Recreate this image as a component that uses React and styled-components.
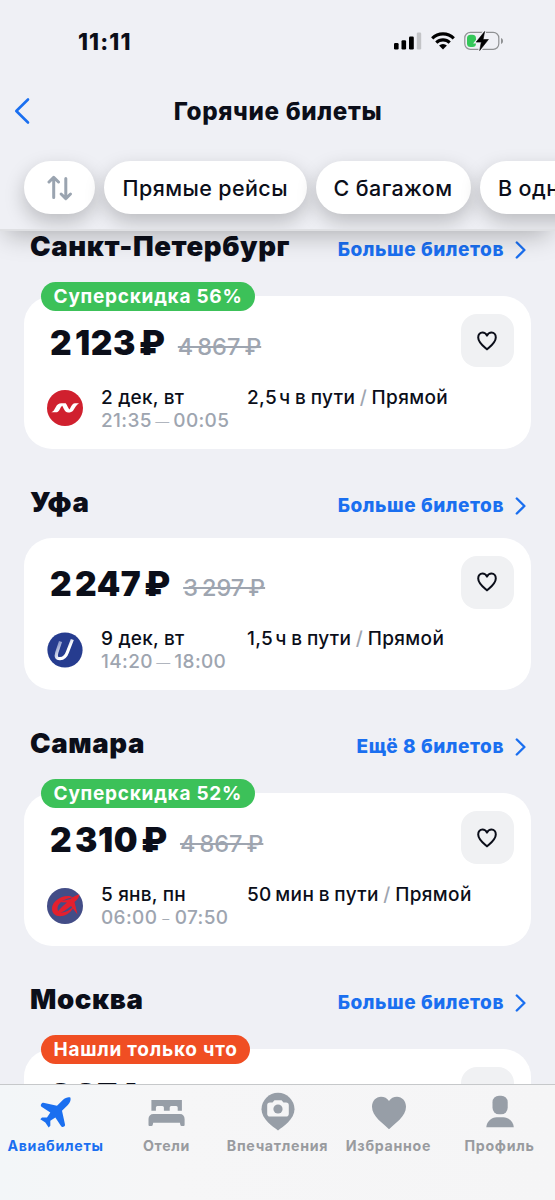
import React from 'react';
import styled, { createGlobalStyle } from 'styled-components';

const ink = '#0b0e19';
const blue = '#1a6ff0';
const gray = '#9ea5b0';
const pageColor = '#eff0f5';

const GlobalStyle = createGlobalStyle`
  * {
    box-sizing: border-box;
  }

  body {
    margin: 0;
    background-color: ${pageColor};
    font-family: Inter, 'Liberation Sans', sans-serif;
    color: ${ink};
  }

  svg {
    display: block;
    flex-shrink: 0;
  }
`;

const Screen = styled.div`
  display: flex;
  flex-direction: column;
  width: 555px;
  height: 1200px;
  overflow: hidden;
  background-color: ${pageColor};
`;

const Header = styled.header`
  position: relative;
  z-index: 1;
  flex-shrink: 0;
  height: 231px;
  overflow: hidden;
  border-bottom: 2px solid #dfe0e3;
  box-shadow: 0 10px 24px -6px rgba(0, 0, 0, 0.28);
`;

const StatusBar = styled.div`
  display: flex;
  align-items: center;
  justify-content: space-between;
  height: 82px;
  padding: 0 51px 0 78px;
`;

const Time = styled.span`
  font-size: 22.7px;
  font-weight: 800;
  letter-spacing: 1.1px;
`;

const StatusIcons = styled.div`
  display: flex;
  align-items: center;
  gap: 9px;
`;

const TitleBar = styled.div`
  display: grid;
  grid-template-columns: 60px 1fr 60px;
  align-items: center;
  height: 58px;
  padding-left: 14px;
  padding-right: 13px;
`;

const Title = styled.h1`
  margin: 0;
  padding-top: 1px;
  font-size: 24.2px;
  line-height: 30px;
  font-weight: 800;
  text-align: center;
  white-space: nowrap;
  letter-spacing: 0.65px;
`;

const Filters = styled.div`
  display: flex;
  gap: 9px;
  padding: 21px 0 0 24px;
`;

const Chip = styled.button`
  display: flex;
  align-items: center;
  justify-content: center;
  flex-shrink: 0;
  width: ${props => props.$width}px;
  height: 53px;
  padding: 0;
  border: none;
  border-radius: 27px;
  background-color: #ffffff;
  box-shadow: 0 8px 20px rgba(0, 0, 0, 0.22);
  color: ${ink};
  font-family: inherit;
  font-size: 21.5px;
  font-weight: 500;
  letter-spacing: 0.4px;
  white-space: nowrap;
`;

const Content = styled.main`
  flex: 1;
  min-height: 0;
  margin-top: -1px;
  overflow: hidden;
`;

const Section = styled.section`
  padding-bottom: 37px;
`;

const SectionHead = styled.div`
  display: flex;
  align-items: center;
  justify-content: space-between;
  height: 32px;
  margin-bottom: ${props => (props.$tall ? 34.3 : 20)}px;
  padding: 0 29px;
`;

const City = styled.h2`
  margin: 0;
  padding-left: 1px;
  font-size: 27.6px;
  line-height: 32px;
  font-weight: 900;
  letter-spacing: 0.6px;
`;

const More = styled.a`
  display: flex;
  align-items: center;
  gap: 11px;
  padding-top: 8px;
  color: ${blue};
  font-size: 19px;
  line-height: 24px;
  font-weight: 800;
  letter-spacing: 0.55px;
`;

const Card = styled.article`
  position: relative;
  height: 152.4px;
  margin: 0 24px;
  padding: 18px 17.5px 0 26px;
  border-radius: 28px;
  background-color: #ffffff;
`;

const Badge = styled.span`
  position: absolute;
  top: -14.5px;
  left: 17px;
  height: 29.5px;
  padding: 0 12.5px;
  border-radius: 15px;
  background-color: ${props => props.$color};
  color: #ffffff;
  font-size: 19px;
  line-height: 29px;
  font-weight: 700;
  letter-spacing: 0.75px;
  white-space: nowrap;
`;

const CardTop = styled.div`
  display: flex;
  justify-content: space-between;
  height: 53px;
`;

const Prices = styled.div`
  display: flex;
  align-items: baseline;
  gap: 12.5px;
  padding-top: 2.5px;
  line-height: 53px;
  white-space: nowrap;
`;

const Price = styled.strong`
  font-size: 33.5px;
  font-weight: 900;
  letter-spacing: 0.55px;
`;

const OldPrice = styled.s`
  color: ${gray};
  font-size: 23.5px;
  font-weight: 500;
  text-decoration-thickness: 2px;
`;

const LikeButton = styled.button`
  display: flex;
  align-items: center;
  justify-content: center;
  width: 53px;
  height: 53px;
  padding: 0;
  border: none;
  border-radius: 16px;
  background-color: #f0f1f3;
`;

const Flight = styled.div`
  display: grid;
  grid-template-columns: 54px 146px 1fr;
  height: 46px;
  margin-top: 18.7px;
  margin-left: -3px;
  font-size: 19px;
  line-height: 23px;
  font-weight: 500;
  letter-spacing: 0.35px;
  white-space: nowrap;
`;

const LogoCell = styled.div`
  display: flex;
  align-items: center;
  height: 45px;
`;

const Day = styled.div`
  letter-spacing: 0.2px;
`;

const Muted = styled.div`
  color: ${gray};
`;

const Route = styled.div`
  word-spacing: -0.9px;
`;

const Dash = styled.span`
  display: inline-flex;
  justify-content: center;
  width: ${props => props.$width}px;
  margin: 0 4.5px 0 4px;
  font-size: 14px;
  font-weight: 300;
  letter-spacing: 0;
`;

const Slash = styled.span`
  color: ${gray};
`;

const TabBar = styled.nav`
  display: grid;
  grid-template-columns: repeat(5, 111px);
  flex-shrink: 0;
  height: 116px;
  border-top: 1px solid #c6c8ca;
  background: linear-gradient(90deg, #f3f6f8, #f6f6f7 30%, #f5f5f6);
`;

const Tab = styled.a`
  display: flex;
  flex-direction: column;
  align-items: center;
  padding-top: 7px;
  color: ${props => (props.$active ? blue : '#979ea7')};
`;

const TabLabel = styled.span`
  margin-top: 4px;
  color: ${props => (props.$active ? blue : '#999b9f')};
  font-size: 14.2px;
  line-height: 20px;
  font-weight: 700;
  letter-spacing: 0.7px;
  white-space: nowrap;
`;

const SignalIcon = () => (
  <svg width="28" height="18" viewBox="0 0 28 18">
    <rect x="0" y="11" width="4.6" height="6.5" rx="1.2" />
    <rect x="7.5" y="8.3" width="4.6" height="9.2" rx="1.2" />
    <rect x="15" y="4.5" width="4.8" height="13" rx="1.2" />
    <rect x="22.8" y="0.5" width="4.4" height="17" rx="1.2" fill="#c3c4c7" />
  </svg>
);

const WifiIcon = () => (
  <svg width="24" height="18" viewBox="0 0 24 18">
    <g fill="none" stroke="#000" strokeWidth="3.1">
      <path d="M1.2 6.3a15.4 15.4 0 0 1 21.6 0" />
      <path d="M5.3 10.6a9.6 9.6 0 0 1 13.4 0" />
    </g>
    <path d="M12 17.4 8.1 13.5a5.6 5.6 0 0 1 7.8 0z" />
  </svg>
);

const BatteryIcon = () => (
  <svg width="40" height="20" viewBox="0 0 40 20">
    <rect x="0.8" y="1.4" width="34" height="17" rx="5.6" fill="none" stroke="#8f9193" strokeWidth="1.2" />
    <path d="M37 7v6c1.2-.4 2-1.5 2-3s-.8-2.6-2-3z" fill="#8f9193" />
    <rect x="3" y="3.7" width="9" height="12.4" rx="3.6" fill="#34c759" />
    <path d="M20.6.5 12.2 11.1h5.1l-1.6 8.4 8.7-11h-5.3z" stroke={pageColor} strokeWidth="3" />
    <path d="M20.6.5 12.2 11.1h5.1l-1.6 8.4 8.7-11h-5.3z" stroke="#000" strokeWidth=".6" strokeLinejoin="round" />
  </svg>
);

const BackIcon = () => (
  <svg width="17" height="28" viewBox="0 0 17 28" fill="none" stroke={blue} strokeWidth="2.6" strokeLinecap="round" strokeLinejoin="round">
    <path d="M14 2.5 2.3 14 14 25.5" />
  </svg>
);

const SortIcon = () => (
  <svg width="26" height="26" viewBox="0 0 26 26" fill="none" stroke="#9aa4b0" strokeWidth="3" strokeLinecap="round" strokeLinejoin="round">
    <path d="M6.7 22.5V2.5M2 7l4.7-4.6L11.5 7" />
    <path d="M18.8 3.5v20M14.1 19l4.7 4.6 4.7-4.6" />
  </svg>
);

const ChevronIcon = () => (
  <svg width="11" height="18" viewBox="0 0 11 18" fill="none" stroke={blue} strokeWidth="2.4" strokeLinecap="round" strokeLinejoin="round">
    <path d="M1.8 1.5 9.4 9l-7.6 7.5" />
  </svg>
);

const LikeIcon = () => (
  <svg width="20" height="20" viewBox="0 0 20 20" fill="none" stroke={ink} strokeWidth="2" strokeLinejoin="round">
    <path d="M10 18.4C7.5 16 1.2 11.6 1.2 6.4c0-2.8 1.8-4.8 4.2-4.8 2 0 3.7 1.2 4.6 3 .9-1.8 2.6-3 4.6-3 2.4 0 4.2 2 4.2 4.8 0 5.2-6.3 9.6-8.8 12z" />
  </svg>
);

const NordwindLogo = () => (
  <svg width="36" height="36" viewBox="0 0 36 36">
    <circle cx="18" cy="18" r="18" fill="#d0202e" />
    <path d="M4.3 22.3c2.2-.5 3-2.8 4.5-5.3 1.4-2.4 2.9-3.7 5.6-3.7h4.3c1.6 2 2.2 4.5 3.7 6.3 1.6-2 2.2-5.9 5.6-6.3H32c-2.8 1.6-4 5-5.8 7.1-1.3 1.5-2.7 2-5 2-3.7 0-4.2-3.8-6-6.6-2.2 1.7-2.3 5.4-5.2 6.5z" fill="#fff" />
  </svg>
);

const UtairLogo = () => (
  <svg width="36" height="36" viewBox="0 0 36 36">
    <defs>
      <linearGradient id="utair" x1="0" y1="0" x2="0.6" y2="0.6">
        <stop offset="0" stopColor="#6375b8" />
        <stop offset="1" stopColor="#fff" />
      </linearGradient>
    </defs>
    <circle cx="18" cy="18" r="17.6" fill="#263c8f" />
    <path d="M13.5 9.5 9.8 20.5c-1.4 4.5 0 6.4 3.2 6.2 4.5-.3 6.3-3.2 7.5-6.7L25.3 7.5" fill="none" stroke="url(#utair)" strokeWidth="3.2" />
  </svg>
);

const AzimuthLogo = () => (
  <svg width="36" height="36" viewBox="0 0 36 36">
    <circle cx="18" cy="18" r="18" fill="#434d87" />
    <path d="M27 9.5C18 4.5 5.5 12 5 20c-.5 8 8 10.5 15.5 6 4.5-3 6.5-6.5 8-11-3 5-6 7.5-10 8.8-5.5 1.7-8.5.2-8-4C11.2 14.5 18.5 10 27 9.5z" fill="#e3202e" />
    <path d="M32.5 6.5c-1 4-3 6-5 7.5l3 12.5-6.5-8.5c-4 3.5-9 7-15.5 8.5 3-4.5 7-8.5 11.5-12l-9-.5 12.5-3c3-2.5 6-4 9-4.5z" fill="#e3202e" />
  </svg>
);

const PlaneIcon = () => (
  <svg width="40" height="40" viewBox="0.4 -0.3 24 24" fill="currentColor">
    <path d="M17.8 19.2 16 11l3.5-3.5C21 6 21.5 4 21 3c-1-.5-3 0-4.5 1.5L13 8 4.8 6.2c-.5-.1-.9.1-1.1.5l-.3.5c-.2.5-.1 1 .3 1.3L9 12l-2 3H4l-1 1 3 2 2 3 1-1v-3l3-2 3.5 5.3c.3.4.8.5 1.3.3l.5-.2c.4-.3.6-.7.5-1.2z" />
  </svg>
);

const BedIcon = () => (
  <svg width="40" height="40" viewBox="0.6 0 40 40" fill="currentColor">
    <path d="M5 8h30.5v10.7h-4.2V15.5q0-1.5-1.5-1.5h-5q-1.5 0-1.5 1.5v3.2h-5.8V15.5q0-1.5-1.5-1.5h-5q-1.5 0-1.5 1.5v3.2H5z" />
    <path d="M7 22h26.5c3 0 4.7 2 4.7 5v6q0 1-1 1h-2q-1 0-1.2-1l-.5-2.3H6.8L6.3 33q-.2 1-1.2 1h-2q-1 0-1-1v-6c0-3 1.9-5 4.9-5z" />
  </svg>
);

const PinIcon = () => (
  <svg width="40" height="40" viewBox="0 0 40 40">
    <path d="M20 38.4C15 35 3.5 27 3.5 17.3a16.5 16.5 0 0 1 33 0C36.5 27 25 35 20 38.4z" fill="currentColor" />
    <path d="M12 10.5h2.5l2-2.3h7l2 2.3H28q2.8 0 2.8 2.8v8.4q0 2.8-2.8 2.8H12q-2.8 0-2.8-2.8v-8.4q0-2.8 2.8-2.8z" fill="#f5f5f6" />
    <circle cx="20" cy="17" r="4.6" fill="currentColor" />
  </svg>
);

const HeartIcon = () => (
  <svg width="40" height="40" viewBox="0 0 40 40" fill="currentColor">
    <path d="M20 37.2C14 31.5 3 24.5 3 14.8 3 9 7 4.8 12 4.8c3.3 0 6.3 1.5 8 4.2 1.7-2.7 4.7-4.2 8-4.2 5 0 9 4.2 9 10 0 9.7-11 16.7-17 22.4z" />
  </svg>
);

const ProfileIcon = () => (
  <svg width="40" height="40" viewBox="0 0 40 40" fill="currentColor">
    <rect x="12.5" y="3.7" width="15.2" height="18.6" rx="6.5" />
    <path d="M6.3 35.3c.3-5.5 5-10 10.5-10h6.5c5.5 0 10.2 4.5 10.5 10z" />
  </svg>
);

const flights = [
  {
    city: 'Санкт-Петербург',
    more: 'Больше билетов',
    badge: 'Суперскидка 56%',
    badgeColor: '#3cc159',
    price: '2\u200a123\u200a₽',
    oldPrice: '4\u2009867\u2009₽',
    Logo: NordwindLogo,
    date: '2 дек, вт',
    from: '21:35',
    to: '00:05',
    dash: 13,
    duration: '2,5\u200aч в пути',
  },
  {
    city: 'Уфа',
    more: 'Больше билетов',
    price: '2\u200a247\u200a₽',
    oldPrice: '3\u2009297\u2009₽',
    Logo: UtairLogo,
    date: '9 дек, вт',
    from: '14:20',
    to: '18:00',
    dash: 13,
    duration: '1,5\u200aч в пути',
  },
  {
    city: 'Самара',
    more: 'Ещё 8 билетов',
    badge: 'Суперскидка 52%',
    badgeColor: '#3cc159',
    price: '2\u200a310\u200a₽',
    oldPrice: '4\u2009867\u2009₽',
    Logo: AzimuthLogo,
    date: '5 янв, пн',
    from: '06:00',
    to: '07:50',
    dash: 9,
    duration: '50\u2009мин в пути',
  },
  {
    city: 'Москва',
    more: 'Больше билетов',
    badge: 'Нашли только что',
    badgeColor: '#f04e23',
    price: '2\u200a274',
  },
];

const tabs = [
  { label: 'Авиабилеты', Icon: PlaneIcon, active: true },
  { label: 'Отели', Icon: BedIcon },
  { label: 'Впечатления', Icon: PinIcon },
  { label: 'Избранное', Icon: HeartIcon },
  { label: 'Профиль', Icon: ProfileIcon },
];

const Destination = ({ flight }) => (
  <Section>
    <SectionHead $tall={Boolean(flight.badge)}>
      <City>{flight.city}</City>
      <More>
        {flight.more}
        <ChevronIcon />
      </More>
    </SectionHead>
    <Card>
      {flight.badge && <Badge $color={flight.badgeColor}>{flight.badge}</Badge>}
      <CardTop>
        <Prices>
          <Price>{flight.price}</Price>
          {flight.oldPrice && <OldPrice>{flight.oldPrice}</OldPrice>}
        </Prices>
        <LikeButton>
          <LikeIcon />
        </LikeButton>
      </CardTop>
      {flight.date && (
        <Flight>
          <LogoCell>
            <flight.Logo />
          </LogoCell>
          <div>
            <Day>{flight.date}</Day>
            <Muted>
              {flight.from}
              <Dash $width={flight.dash}>{flight.dash > 10 ? '—' : '–'}</Dash>
              {flight.to}
            </Muted>
          </div>
          <Route>
            {flight.duration} <Slash>/</Slash> Прямой
          </Route>
        </Flight>
      )}
    </Card>
  </Section>
);

const App = () => (
  <Screen>
    <GlobalStyle />
    <Header>
      <StatusBar>
        <Time>11:11</Time>
        <StatusIcons>
          <SignalIcon />
          <WifiIcon />
          <BatteryIcon />
        </StatusIcons>
      </StatusBar>
      <TitleBar>
        <BackIcon />
        <Title>Горячие билеты</Title>
      </TitleBar>
      <Filters>
        <Chip $width={71}>
          <SortIcon />
        </Chip>
        <Chip $width={202.5}>Прямые рейсы</Chip>
        <Chip $width={155}>С багажом</Chip>
        <Chip $width={207}>В одну сторону</Chip>
      </Filters>
    </Header>
    <Content>
      {flights.map(flight => (
        <Destination key={flight.city} flight={flight} />
      ))}
    </Content>
    <TabBar>
      {tabs.map(({ label, Icon, active }) => (
        <Tab key={label} $active={active}>
          <Icon />
          <TabLabel $active={active}>{label}</TabLabel>
        </Tab>
      ))}
    </TabBar>
  </Screen>
);

export default App;
